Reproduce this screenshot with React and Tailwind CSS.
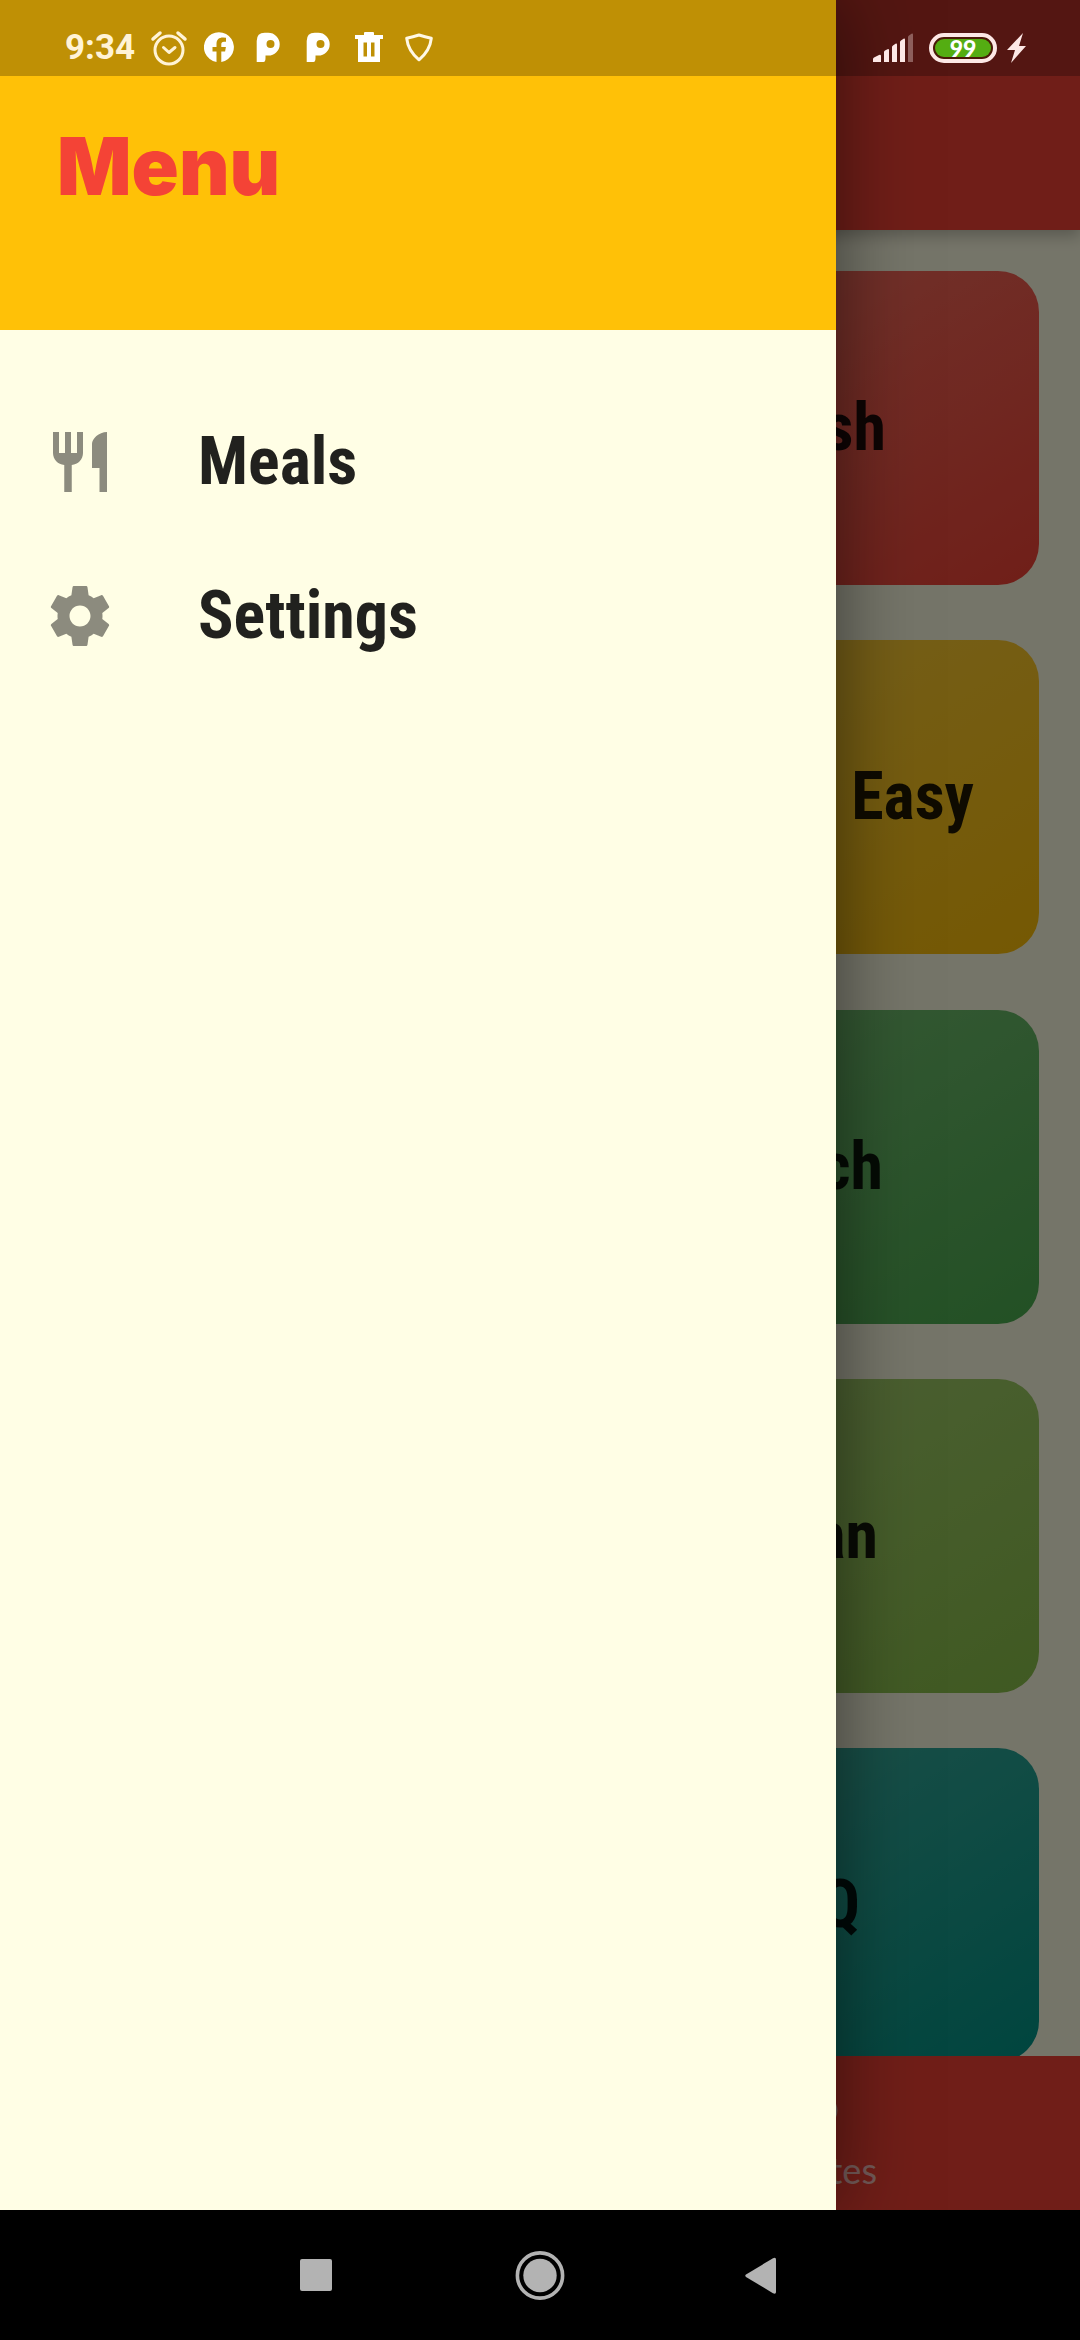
import React from "react";

const condensed = "font-['Roboto_Condensed','Roboto',sans-serif] font-bold [font-stretch:75%] leading-none whitespace-nowrap";

const meals = [
  { name: "British", card: "pr-[153px] from-[#f44336]/70 to-[#f44336]" },
  { name: "Quick & Easy", card: "pr-[65px] from-[#ffc107]/70 to-[#ffc107]" },
  { name: "French", card: "pr-[156px] from-[#4caf50]/70 to-[#4caf50]" },
  { name: "Asian", card: "pr-[161px] from-[#8bc34a]/70 to-[#8bc34a]" },
  { name: "BBQ", card: "pr-[179px] from-[#009688]/70 to-[#009688]" },
];

function MealsPage() {
  return (
    <div className="flex h-[2210px] w-full flex-col bg-[#fffee5]">
      <header className="z-10 h-[230px] shrink-0 bg-[#f44336] shadow-[0_6px_14px_rgba(0,0,0,0.24)]" />
      <main className="flex min-h-0 flex-1 flex-col gap-[55.3px] overflow-hidden pt-[41px] pr-[41px] pl-[561px]">
        {meals.map((m) => (
          <div key={m.name} className={`flex h-[314px] shrink-0 items-center justify-end rounded-[41px] bg-linear-to-br ${m.card}`}>
            <span className={`${condensed} text-[66px] text-black/87`}>{m.name}</span>
          </div>
        ))}
      </main>
      <footer className="z-10 flex h-[154px] shrink-0 bg-[#f44336]">
        <div className="flex-1" />
        <div className="flex flex-1 flex-col items-center pt-[31px] text-white/70">
          <svg className="h-[66px] w-[66px]" viewBox="0 0 24 24" fill="currentColor">
            <path d="M12 21.3 10.6 20C5.400 15.400 2 12.300 2 8.500 2 5.400 4.400 3 7.500 3c1.700 0 3.400.8 4.500 2.100C13.100 3.800 14.800 3 16.500 3 19.600 3 22 5.400 22 8.500c0 3.800-3.400 6.900-8.600 11.500z" />
          </svg>
          <span className="-mt-px mr-[9px] font-['Lato',sans-serif] text-[36px] leading-none">Favorites</span>
        </div>
      </footer>
    </div>
  );
}

function Drawer() {
  return (
    <aside className="absolute top-0 left-0 h-[2210px] w-[836px] bg-[#fffee5] shadow-[0_0_75px_rgba(0,0,0,0.5)]">
      <div className="h-[330px] bg-[#ffc107] pt-[125px] pl-[57px]">
        <h1 className="origin-left scale-x-[0.975] font-['Inter',sans-serif] text-[80px] leading-[81px] font-black text-[#f44336]">Menu</h1>
      </div>
      <nav className="flex flex-col pt-[55px] text-black/87">
        <div className="flex h-[154px] items-center pl-[44px]">
          <svg className="h-[72px] w-[72px] text-black/45" viewBox="0 0 24 24" fill="currentColor">
            <path d="M11 9H9V2H7v7H5V2H3v7c0 2.120 1.660 3.840 3.750 3.970V22h2.500v-9.030C11.340 12.840 13 11.120 13 9V2h-2zM16 6v8h2.500v8H21V2c-2.760 0-5 2.240-5 4z" />
          </svg>
          <span className={`${condensed} ml-[82px] text-[66px]`}>Meals</span>
        </div>
        <div className="flex h-[154px] items-center pl-[44px]">
          <svg className="h-[72px] w-[72px] text-black/45" viewBox="0 0 24 24" fill="currentColor">
            <path d="M19.430 12.980c.04-.32.07-.64.07-.98s-.03-.66-.07-.98l2.110-1.650c.19-.15.24-.42.12-.64l-2-3.460c-.12-.22-.39-.3-.61-.22l-2.490 1c-.52-.4-1.080-.73-1.690-.98l-.38-2.650C14.460 2.180 14.250 2 14 2h-4c-.25 0-.46.18-.49.42l-.38 2.650c-.61.25-1.170.59-1.690.98l-2.490-1c-.23-.09-.49 0-.61.22l-2 3.460c-.13.22-.07.49.12.64l2.110 1.650c-.04.32-.07.65-.07.98s.03.66.07.98l-2.110 1.650c-.19.15-.24.42-.12.64l2 3.460c.12.22.39.3.61.22l2.490-1c.52.4 1.080.73 1.690.98l.38 2.650c.03.24.24.42.49.42h4c.25 0 .46-.18.49-.42l.38-2.650c.61-.25 1.170-.59 1.690-.98l2.490 1c.23.09.49 0 .61-.22l2-3.460c.12-.22.07-.49-.12-.64l-2.110-1.650zM12 15.500c-1.930 0-3.500-1.570-3.500-3.500s1.570-3.500 3.500-3.500 3.500 1.570 3.500 3.500-1.570 3.500-3.500 3.500z" />
          </svg>
          <span className={`${condensed} ml-[82px] text-[66px]`}>Settings</span>
        </div>
      </nav>
    </aside>
  );
}

function PeaIcon({ className }) {
  return (
    <svg className={`h-[30px] w-[24px] ${className}`} viewBox="0 0 24 30" fill="white" fillRule="evenodd">
      <path d="M.7 30V9q0-8.200 8-8.200h3.600a11.400 11.400 0 0 1 0 22.800H9.500V26q0 4-2 4zM14.500 8a4 4 0 1 0 0 8a4 4 0 1 0 0-8z" />
    </svg>
  );
}

function StatusBar() {
  return (
    <div className="absolute top-0 left-0 flex h-[76px] w-full items-start bg-black/25 pt-[29px] pl-[65px]">
      <span className="w-[71px] pt-[1px] font-['Roboto',sans-serif] text-[35px] leading-[36px] font-bold whitespace-nowrap text-[#fff3d6]">9:34</span>
      <svg className="mt-[1px] ml-[14px] h-[36px] w-[38px]" viewBox="0 0 38 36" fill="none" stroke="#fff3d6" strokeWidth="3" strokeLinecap="round" strokeLinejoin="round">
        <circle cx="19" cy="20" r="14" />
        <path d="M13.500 17.500l5.500 5 6-5" />
        <path d="M3 9l7-6M28 3l7 6" strokeWidth="3.500" />
      </svg>
      <svg className="mt-[3px] ml-[16px] h-[30px] w-[31px]" viewBox="0 0 31 30" fill="white">
        <path d="M12.500 30V19.500H8.500v-4.500h4V12c0-4.500 2.500-6.500 6.500-6.500l3 .3v3.900h-2c-2 0-2.700 1-2.700 2.800v2.500h4.600l-.8 4.500h-3.800V30A15 15 0 1 0 12.500 30z" />
      </svg>
      <PeaIcon className="mt-[3px] ml-[21px]" />
      <PeaIcon className="mt-[3px] ml-[26px]" />
      <svg className="mt-[3px] ml-[25px] h-[30px] w-[28px]" viewBox="0 0 28 30" fill="white" fillRule="evenodd">
        <path d="M0 3h9V1q0-1 1-1h8q1 0 1 1v2h9v4H0zM3 7h22v23H3zM8.500 10.500v14H12v-14zM16 10.500v14h3.500v-14z" />
      </svg>
      <svg className="mt-[4px] ml-[22px] h-[29px] w-[28px]" viewBox="0 0 28 29" fill="none" stroke="#fff8e6" strokeWidth="3" strokeLinejoin="round">
        <path d="M14 2Q20 4 26.300 5.300Q25 17.500 14 26.800Q3 17.500 1.700 5.300Q8 4 14 2z" />
      </svg>
      <svg className="mt-[4px] ml-[440px] h-[29px] w-[41px]" viewBox="0 0 41 29" fill="#fde8e6">
        <path d="M0 29v-3q0-1 1-1.500L6 22q2-.7 2 1v6zM11 29V19q0-1 1-1.500l2.500-1.300q1.500-.7 1.500 1V29zM19 29V14q0-1 1-1.500l2.500-1.800q1.500-.7 1.500 1V29zM27 29V9q0-1 1-1.500l2.500-1.800q1.500-.7 1.500 1V29z" />
        <path d="M35 29V4q0-1 1-1.500L38.500.7q1.500-.7 1.500 1V29z" opacity=".35" />
      </svg>
      <div className="mt-[4px] ml-[15px] flex h-[30px] w-[68px] items-center justify-center rounded-full border-4 border-[#fde8e6] bg-[#4a1a08] p-[2px]">
        <div className="flex h-full w-full items-center justify-center rounded-full bg-[#54ad12] font-['Lato',sans-serif] text-[23px] leading-none font-black text-white">99</div>
      </div>
      <svg className="mt-[4px] ml-[10px] h-[30px] w-[20px]" viewBox="0 0 20 30" fill="#fde8e6">
        <path d="M16 0L0 17h8L4 30 19 13h-7z" />
      </svg>
    </div>
  );
}

function NavigationBar() {
  return (
    <div className="flex h-[130px] items-center bg-black pl-[300px]">
      <div className="h-[32px] w-[32px] rounded-[2px] bg-[#b3b3b3]" />
      <svg className="ml-[183px] h-[50px] w-[50px]" viewBox="0 0 50 50">
        <circle cx="25" cy="25.500" r="22.600" fill="none" stroke="#b3b3b3" strokeWidth="3.600" />
        <circle cx="25" cy="25.500" r="16.700" fill="#b3b3b3" />
      </svg>
      <svg className="ml-[180px] h-[37px] w-[31px]" viewBox="0 0 31 37" fill="#b3b3b3">
        <path d="M1 17.500Q-.5 18.700 1 19.900L28 36.300Q31 37.500 31 35V2.500Q31 0 28 1.200z" />
      </svg>
    </div>
  );
}

export default function App() {
  return (
    <div className="relative h-[2340px] w-[1080px] overflow-hidden bg-black">
      <div className="relative isolate h-[2210px] overflow-hidden">
        <MealsPage />
        <div className="absolute inset-0 z-20 bg-black/54" />
        <div className="absolute inset-0 z-30">
          <Drawer />
          <StatusBar />
        </div>
      </div>
      <NavigationBar />
    </div>
  );
}
